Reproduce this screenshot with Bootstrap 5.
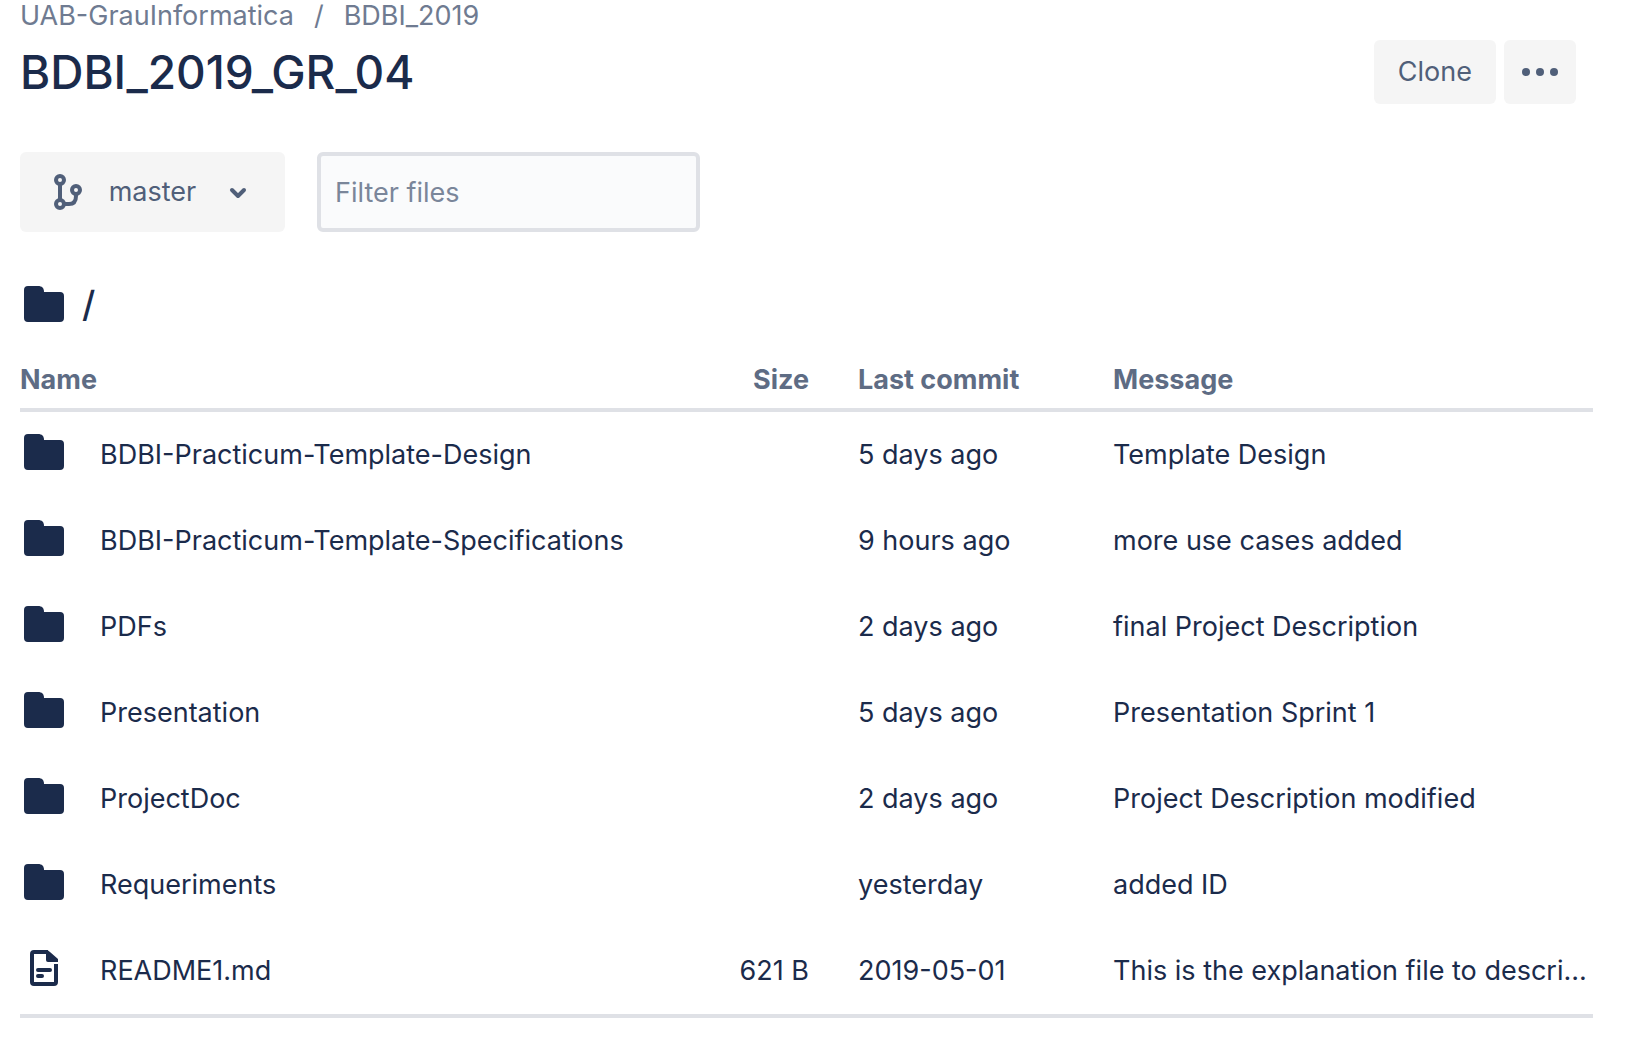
<!DOCTYPE html>
<html lang="en">
<head>
<meta charset="utf-8">
<meta name="viewport" content="width=device-width, initial-scale=1">
<title>BDBI_2019_GR_04</title>
<link href="https://cdn.jsdelivr.net/npm/bootstrap@5.3.0/dist/css/bootstrap.min.css" rel="stylesheet">
<style>
  body { font-family: Inter, "Liberation Sans", sans-serif; font-size: 27px; line-height: 32px; color: #1b2b4b; background: #fff; }
  a { color: inherit; text-decoration: none; }
  a:hover { text-decoration: underline; }
  svg { display: block; flex: none; }
  .repo-page { padding: 0 43px 30px 20px; }
  .crumbs { --bs-breadcrumb-divider-color: #6f7b91; --bs-breadcrumb-item-padding-x: 20px; --bs-breadcrumb-margin-bottom: 0; color: #6f7b91; }
  .repo-title { font-size: 46px; line-height: 56px; font-weight: 500; padding: 12px 0 4px; }
  .repo-actions { padding-right: 17px; }
  .btn-soft { --bs-btn-font-size: 27px; --bs-btn-line-height: 32px; --bs-btn-color: #505f79; --bs-btn-bg: #f5f5f5; --bs-btn-hover-bg: #ebecf0; --bs-btn-hover-color: #505f79; --bs-btn-border-width: 0; --bs-btn-border-radius: 6px; --bs-btn-padding-y: 16px; --bs-btn-padding-x: 24px; }
  .btn-more { --bs-btn-padding-x: 16px; }
  .btn-branch { --bs-btn-padding-x: 28px; height: 80px; width: 265px; }
  .toolbar { padding-top: 48px; gap: 32px; }
  .filter-box { width: 383px; height: 80px; font-size: 27px; border: 4px solid #dfe1e6; border-radius: 6px; background: #fafbfc; padding: 0 14px; color: #1b2b4b; }
  .filter-box::placeholder { color: #7a869a; }
  .path-line { font-size: 36px; line-height: 40px; font-weight: 500; padding: 50px 0 38px 2px; }
  .files { table-layout: fixed; border-collapse: separate; border-spacing: 0; --bs-table-color: #1b2b4b; --bs-table-bg: transparent; }
  .files > thead > tr > th { height: 48px; padding: 0 0 12px; color: #5e6c84; font-weight: 700; border: 0; border-bottom: 4px solid #dfe1e6; }
  .files > tbody > tr > td { height: 86px; padding: 0; vertical-align: middle; border: 0; }
  .files > tbody > tr > td:first-child { padding: 0 0 6px 2px; }
  .files > tbody > tr:last-child > td { height: 90px; border-bottom: 4px solid #dfe1e6; }
  .col-kind { width: 80px; }
  .col-size { width: 100px; }
  .col-gap { width: 49px; }
  .col-when { width: 255px; }
  .col-note { width: 480px; }
</style>
<script src="https://cdn.jsdelivr.net/npm/bootstrap@5.3.0/dist/js/bootstrap.bundle.min.js"></script>
</head>
<body>
<svg width="0" height="0" class="position-absolute" aria-hidden="true">
  <symbol id="folder" viewBox="0 0 44 44"><path d="M2 8a4 4 0 0 1 4-4h10c4 0 6 2 6 6h16a4 4 0 0 1 4 4v22a4 4 0 0 1-4 4H6a4 4 0 0 1-4-4z" fill="currentColor"/></symbol>
</svg>
<main class="container-fluid repo-page">
  <header class="d-flex justify-content-between align-items-end">
    <div>
      <nav aria-label="Breadcrumb">
        <ol class="breadcrumb crumbs">
          <li class="breadcrumb-item"><a href="#">UAB-GrauInformatica</a></li>
          <li class="breadcrumb-item"><a href="#">BDBI_2019</a></li>
        </ol>
      </nav>
      <h1 class="repo-title mb-0">BDBI_2019_GR_04</h1>
    </div>
    <div class="repo-actions d-flex gap-2">
      <button type="button" class="btn btn-soft">Clone</button>
      <button type="button" class="btn btn-soft btn-more" aria-label="More actions">
        <svg width="40" height="32" viewBox="0 0 40 32" fill="currentColor"><circle cx="6" cy="16" r="4"/><circle cx="20" cy="16" r="4"/><circle cx="34" cy="16" r="4"/></svg>
      </button>
    </div>
  </header>

  <div class="toolbar d-flex align-items-center">
    <button type="button" class="btn btn-soft btn-branch d-flex align-items-center" aria-haspopup="true">
      <svg width="40" height="40" viewBox="0 0 40 40" fill="none" stroke="currentColor" stroke-width="4"><circle cx="12" cy="8" r="4"/><circle cx="12" cy="32" r="4"/><circle cx="28" cy="18" r="4"/><path d="M12 12v16M28 22v2q0 8-7 8h-5"/></svg>
      <span class="flex-grow-1 text-center">master</span>
      <svg width="40" height="40" viewBox="0 0 40 40" fill="none" stroke="currentColor" stroke-width="4" stroke-linecap="round" stroke-linejoin="round"><path d="M15 18l6 6 6-6"/></svg>
    </button>
    <input type="text" class="filter-box" placeholder="Filter files" aria-label="Filter files">
  </div>

  <div class="path-line d-flex align-items-center">
    <svg width="44" height="44" role="img" aria-label="Folder"><use href="#folder"/></svg>
    <span class="ms-3">/</span>
  </div>

  <table class="table files mb-0">
    <colgroup><col class="col-kind"><col><col class="col-size"><col class="col-gap"><col class="col-when"><col class="col-note"></colgroup>
    <thead><tr><th colspan="2" scope="col">Name</th><th scope="col" class="text-end">Size</th><th></th><th scope="col">Last commit</th><th scope="col">Message</th></tr></thead>
    <tbody>
      <tr><td><svg width="44" height="44"><use href="#folder"/></svg></td><td><a href="#">BDBI-Practicum-Template-Design</a></td><td></td><td></td><td>5 days ago</td><td class="text-nowrap">Template Design</td></tr>
      <tr><td><svg width="44" height="44"><use href="#folder"/></svg></td><td><a href="#">BDBI-Practicum-Template-Specifications</a></td><td></td><td></td><td>9 hours ago</td><td class="text-nowrap">more use cases added</td></tr>
      <tr><td><svg width="44" height="44"><use href="#folder"/></svg></td><td><a href="#">PDFs</a></td><td></td><td></td><td>2 days ago</td><td class="text-nowrap">final Project Description</td></tr>
      <tr><td><svg width="44" height="44"><use href="#folder"/></svg></td><td><a href="#">Presentation</a></td><td></td><td></td><td>5 days ago</td><td class="text-nowrap">Presentation Sprint 1</td></tr>
      <tr><td><svg width="44" height="44"><use href="#folder"/></svg></td><td><a href="#">ProjectDoc</a></td><td></td><td></td><td>2 days ago</td><td class="text-nowrap">Project Description modified</td></tr>
      <tr><td><svg width="44" height="44"><use href="#folder"/></svg></td><td><a href="#">Requeriments</a></td><td></td><td></td><td>yesterday</td><td class="text-nowrap">added ID</td></tr>
      <tr><td><svg width="44" height="44" viewBox="0 0 44 44" fill="none" stroke="currentColor" stroke-width="4" stroke-linecap="round"><path d="M34 18v18a2 2 0 0 1-2 2H12a2 2 0 0 1-2-2V8a2 2 0 0 1 2-2h14" stroke-linecap="butt" stroke-linejoin="round"/><path d="M24 4q2 0 4 2l8 7v3H26q-2 0-2-2z" fill="currentColor" stroke="none"/><path d="M16 24h12M16 30h4"/></svg></td><td><a href="#">README1.md</a></td><td class="text-end">621 B</td><td></td><td>2019-05-01</td><td class="text-nowrap">This is the explanation file to descri...</td></tr>
    </tbody>
  </table>
</main>
</body>
</html>
